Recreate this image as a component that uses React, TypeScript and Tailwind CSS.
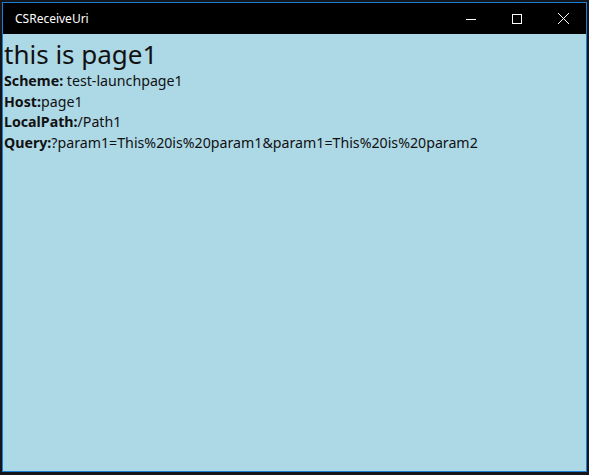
import React from 'react';

const rows = [
  { label: 'Scheme:', value: ' test-launchpage1' },
  { label: 'Host:', value: 'page1' },
  { label: 'LocalPath:', value: '/Path1' },
  { label: 'Query:', value: '?param1=This%20is%20param1&param1=This%20is%20param2' },
];

export default function App() {
  return (
    <div className="w-[589px] h-[475px] bg-[#15161c] p-[2px] pb-[3px] pr-[2px] overflow-hidden">
      <div className="flex flex-col h-full border border-[#1a7fd4] bg-[#add8e6]">
        <div className="h-[31px] bg-black flex items-center shrink-0">
          <span
            className="pl-[12px] text-white text-[12px] leading-none"
            style={{ fontFamily: '"Noto Sans", "Open Sans", sans-serif' }}
          >
            CSReceiveUri
          </span>
          <div className="ml-auto flex h-full">
            <div className="w-[46px] h-full flex items-center justify-center">
              <svg width="10" height="10" viewBox="0 0 10 10">
                <line x1="0" y1="5.5" x2="10" y2="5.5" stroke="white" strokeWidth="1" />
              </svg>
            </div>
            <div className="w-[46px] h-full flex items-center justify-center">
              <svg width="10" height="10" viewBox="0 0 10 10">
                <rect x="0.5" y="0.5" width="9" height="9" fill="none" stroke="white" strokeWidth="1" />
              </svg>
            </div>
            <div className="w-[46px] h-full flex items-center justify-center">
              <svg width="11" height="11" viewBox="0 0 11 11">
                <path d="M0 0L11 11M11 0L0 11" stroke="white" strokeWidth="1" />
              </svg>
            </div>
          </div>
        </div>
        <div
          className="pl-[1px] pt-[3px] text-[#111]"
          style={{ fontFamily: '"Noto Sans", "Open Sans", sans-serif' }}
        >
          <div className="text-[26px] leading-[34px]">this is page1</div>
          {rows.map((r) => (
            <div key={r.label} className="text-[14.2px] leading-[20.5px]">
              <span className="font-bold">{r.label}</span>
              <span className="whitespace-pre">{r.value}</span>
            </div>
          ))}
        </div>
      </div>
    </div>
  );
}
